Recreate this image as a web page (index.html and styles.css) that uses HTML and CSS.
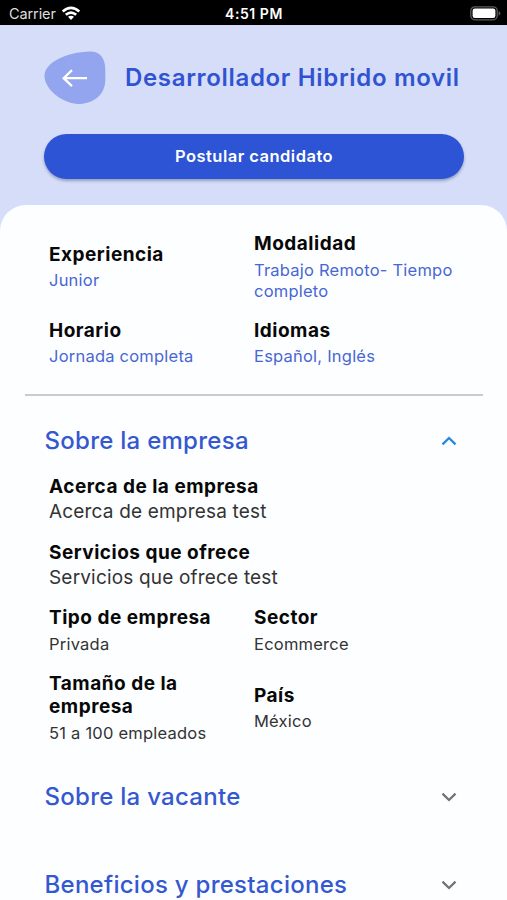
FILE: index.html
```html
<!DOCTYPE html>
<html lang="es">
<head>
<meta charset="utf-8">
<title>Desarrollador Hibrido movil</title>
<link rel="stylesheet" href="styles.css">
</head>
<body>
<div class="status">
  <div class="carrier"><span>Carrier</span>
    <svg width="20" height="15" viewBox="0 0 20 15" fill="none" stroke="#fff" stroke-width="2.6"><path d="M1.700 5.400Q10-1.800 18.300 5.400M4.800 8.800Q10 4.300 15.200 8.800"/><path d="M7 10.800Q10 8.500 13 10.800L10 14Z" fill="#fff" stroke="none"/></svg>
  </div>
  <span class="clock">4:51 PM</span>
  <svg class="battery" width="31" height="15" viewBox="0 0 31 15"><rect x=".8" y=".8" width="26.4" height="13" rx="4" fill="#000" stroke="#5c5c5c" stroke-width="1.3"/><rect x="2.6" y="2.6" width="22.8" height="9.4" rx="2.2" fill="#fff"/><path d="M28.6 5V9.8Q30.4 8.8 30.4 7.4T28.6 5Z" fill="#5c5c5c"/></svg>
</div>
<header class="hero">
  <div class="heading">
    <svg class="back" width="62" height="54" viewBox="0 0 62 54"><path d="M46 .6C56 .4 61.3 7 61.3 19V29C61.3 44 49 53 34.500 53C20 53 .5 39 .5 25C.5 12 22 1 46 .6Z" fill="#92a5ee"/><path d="M43 27.200H20M28 19.200L19.700 27.200L28 35.200" fill="none" stroke="#fff" stroke-width="2.3"/></svg>
    <h1>Desarrollador Hibrido movil</h1>
  </div>
  <button class="apply">Postular candidato</button>
</header>
<main class="sheet">
  <section class="fields summary">
    <div class="field"><h3>Experiencia</h3><p>Junior</p></div>
    <div class="field"><h3>Modalidad</h3><p>Trabajo Remoto- Tiempo completo</p></div>
    <div class="field"><h3>Horario</h3><p>Jornada completa</p></div>
    <div class="field"><h3>Idiomas</h3><p>Español, Inglés</p></div>
  </section>
  <hr>
  <div class="section open"><h2>Sobre la empresa</h2><svg width="16" height="10" viewBox="0 0 16 10"><path d="M1.500 8.300L8 2L14.500 8.300"/></svg></div>
  <section class="fields company">
    <div class="field wide"><h3>Acerca de la empresa</h3><p>Acerca de empresa test</p></div>
    <div class="field wide"><h3>Servicios que ofrece</h3><p>Servicios que ofrece test</p></div>
    <div class="field"><h3>Tipo de empresa</h3><p>Privada</p></div>
    <div class="field"><h3>Sector</h3><p>Ecommerce</p></div>
    <div class="field"><h3>Tamaño de la empresa</h3><p>51 a 100 empleados</p></div>
    <div class="field"><h3>País</h3><p>México</p></div>
  </section>
  <div class="section"><h2>Sobre la vacante</h2><svg width="16" height="10" viewBox="0 0 16 10"><path d="M1.500 1.700L8 8L14.500 1.700"/></svg></div>
  <div class="section"><h2>Beneficios y prestaciones</h2><svg width="16" height="10" viewBox="0 0 16 10"><path d="M1.500 1.700L8 8L14.500 1.700"/></svg></div>
</main>
</body>
</html>
```
FILE: styles.css
```css
* { box-sizing: border-box; }
body { margin: 0; height: 900px; overflow: hidden; background: #d5ddf9; font-family: Inter, "Liberation Sans", sans-serif; }
h1, h2, h3, p { margin: 0; }
.status { height: 25px; background: #000; color: #fff; display: grid; grid-template-columns: 1fr auto 1fr; align-items: center; padding: 2px 6px 0 9px; font-size: 14.5px; line-height: 23px; }
.carrier { display: flex; align-items: center; gap: 5px; color: #ddd; letter-spacing: -.1px; }
.clock { font-weight: 600; font-size: 14px; letter-spacing: .55px; margin-right: 2px; }
.battery { justify-self: end; }
.hero { height: 180px; padding: 26px 44px 0; }
.heading { display: flex; align-items: center; gap: 19px; height: 54px; }
.back { flex: none; }
h1 { font-size: 24px; line-height: 30px; font-weight: 640; color: #3053d2; white-space: nowrap; letter-spacing: .67px; }
.apply { display: block; width: 420px; height: 45px; margin-top: 29px; padding: 0; border: 0; border-radius: 23px; background: #2d54d5; color: #fff; font: 600 16.5px/45px Inter, sans-serif; letter-spacing: .48px; box-shadow: 0 2px 3px rgba(30, 40, 90, .35); }
.sheet { height: 695px; background: #fdfeff; border-radius: 26px 26px 0 0; padding-top: 27px; overflow: hidden; }
.fields { display: grid; grid-template-columns: 205px 205px; align-items: center; row-gap: 17px; padding-left: 49px; }
.field h3 { font-size: 19px; line-height: 23px; font-weight: 650; color: #080808; letter-spacing: .5px; }
.field p { margin-top: 4.5px; font-size: 16.5px; line-height: 21px; color: #333; letter-spacing: .22px; }
.summary p { color: #4867d3; }
.field.wide { grid-column: 1 / 3; }
.field.wide p { margin-top: 2px; font-size: 19px; line-height: 23px; letter-spacing: .18px; }
hr { margin: 26.5px 24px 0 25px; height: 2.5px; border: 0; background: #cbcbcd; }
.section { display: flex; align-items: center; justify-content: space-between; height: 88px; padding: 0 50px 0 44.5px; }
.section.open { height: 79px; padding-top: 10px; }
.section svg { fill: none; stroke: #737373; stroke-width: 2.3; }
.section.open svg { stroke: #2488df; }
h2 { font-size: 24px; line-height: 30px; font-weight: 500; color: #3458d0; letter-spacing: .27px; white-space: nowrap; }
.company { row-gap: 17.6px; margin-bottom: 9.5px; }
```
